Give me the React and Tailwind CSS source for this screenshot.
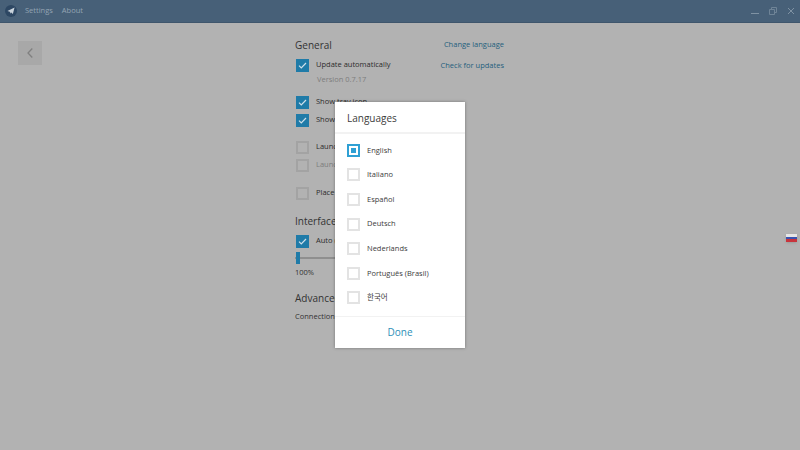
const languages = ["English", "Italiano", "Español", "Deutsch", "Nederlands", "Português (Brasil)", "한국어"];

function CheckRow({ checked, dim, label, className }) {
    return (
        <div className={`flex items-center h-[14px] ml-px ${className || ""}`}>
            <div className={`w-[13px] h-[13px] shrink-0 flex items-center justify-center ${checked ? "bg-[#1f7ba8]" : "border-2 border-[#a3a3a3]"}`}>
                {checked && (
                    <svg width="9" height="7" viewBox="0 0 10 8" fill="none">
                        <path d="M1 4.2 L3.6 6.8 L9 1.2" stroke="#cfe0ea" strokeWidth="1.4" />
                    </svg>
                )}
            </div>
            <span className={`ml-[7px] text-[7.5px] whitespace-nowrap ${dim ? "text-[#7d7d7d]" : "text-[#2c2c2c]"}`}>{label}</span>
        </div>
    );
}

function LanguageRow({ name, selected }) {
    return (
        <div className="flex items-center h-[24.6px] pl-[12px]">
            <div className={`w-[13px] h-[13px] flex items-center justify-center border-2 ${selected ? "border-[#2fa0d4]" : "border-[#e3e3e3]"}`}>
                {selected && <div className="w-[5px] h-[5px] bg-[#2fa0d4]" />}
            </div>
            <span className="ml-[7px] text-[7.5px] text-[#3c3c3c]">{name}</span>
        </div>
    );
}

export default function App() {
    return (
        <div className="relative w-[800px] h-[450px] overflow-hidden bg-[#b2b2b2] font-['Open_Sans','Noto_Sans_CJK_KR',sans-serif]">
            {/* Title bar */}
            <div className="flex items-center h-[23px] bg-[#476078] border-b border-[#3f566c]">
                <div className="ml-[5px] w-[12px] h-[12px] rounded-full bg-[#2d4763] flex items-center justify-center">
                    <svg width="8" height="8" viewBox="0 0 9 9">
                        <path d="M0.5 4.5 L8.5 0.7 L6.6 8 L4.4 6 L3.6 7.6 L3.2 5.3 Z" fill="#c9d3dc" />
                    </svg>
                </div>
                <span className="ml-[8px] text-[7.5px] text-[#93a4b3]">Settings</span>
                <span className="ml-[9px] text-[7.5px] text-[#93a4b3]">About</span>
                <div className="ml-auto mr-[5px] flex items-center gap-[10px]">
                    <svg width="8" height="8" viewBox="0 0 8 8" fill="none"><path d="M0 6.5 H8" stroke="#7f92a3" /></svg>
                    <svg width="8" height="8" viewBox="0 0 8 8" fill="none"><path d="M0.5 2.5 H5.5 V7.5 H0.5 Z M2.5 2 V0.5 H7.5 V5.5 H6" stroke="#6f8497" /></svg>
                    <svg width="8" height="8" viewBox="0 0 8 8" fill="none"><path d="M1 1 L7 7 M7 1 L1 7" stroke="#7f92a3" /></svg>
                </div>
            </div>

            <div className="flex">
                {/* Back button */}
                <div className="ml-[18px] mt-[18px] w-[24px] h-[24px] bg-[#a8a8a8] flex items-center justify-center">
                    <svg width="6" height="10" viewBox="0 0 6 10" fill="none"><path d="M5.3 0.5 L1 5 L5.3 9.5" stroke="#808080" strokeWidth="1.3" /></svg>
                </div>

                {/* Settings column */}
                <div className="ml-[253px] mt-[15px] w-[209px] flex flex-col">
                    <div className="flex justify-between items-center h-[14px]">
                        <span className="text-[10px] text-[#333333]">General</span>
                        <span className="text-[7.5px] text-[#245f7d]">Change language</span>
                    </div>
                    <div className="flex justify-between mt-[6px]">
                        <CheckRow checked label="Update automatically" />
                        <span className="text-[7.5px] text-[#245f7d] leading-[14px]">Check for updates</span>
                    </div>
                    <span className="ml-[22px] text-[7.5px] leading-[14px] text-[#7d7d7d]">Version 0.7.17</span>
                    <CheckRow checked label="Show tray icon" className="mt-[9px]" />
                    <CheckRow checked label="Show taskbar icon" className="mt-[4px]" />
                    <CheckRow label="Launch Telegram" className="mt-[13px]" />
                    <CheckRow dim label="Launch minimized" className="mt-[4px]" />
                    <CheckRow label="Place Telegram" className="mt-[14px]" />
                    <span className="mt-[14px] text-[10px] leading-[14px] text-[#333333]">Interface Scale</span>
                    <CheckRow checked label="Auto (100%)" className="mt-[6px]" />
                    <div className="relative mt-[4px] h-[12px]">
                        <div className="absolute left-0 top-[5px] w-[120px] h-[2px] bg-[#8f8f8f]" />
                        <div className="absolute left-px top-0 w-[4px] h-[12px] bg-[#1f7ba8]" />
                    </div>
                    <span className="mt-[2px] text-[7.5px] leading-[12px] text-[#333333]">100%</span>
                    <span className="mt-[13px] text-[10px] leading-[14px] text-[#333333]">Advanced</span>
                    <span className="mt-[4px] text-[7.5px] leading-[14px] text-[#333333]">Connection type</span>
                </div>
            </div>

            {/* Language flag */}
            <div className="absolute left-[786px] top-[234px] w-[11px] h-[8px] flex flex-col shadow-sm">
                <div className="h-[3px] bg-[#e6e6e6]" />
                <div className="h-[2px] bg-[#3a52b0]" />
                <div className="h-[3px] bg-[#c8343c]" />
            </div>

            {/* Languages dialog */}
            <div className="absolute left-[335px] top-[102px] w-[130px] h-[246px] bg-white shadow-[0_0_3px_rgba(0,0,0,0.35)] flex flex-col">
                <div className="h-[32px] flex items-center pl-[12px] pt-[2px] border-b-2 border-[#f2f2f2] text-[10px] text-[#3c3c3c]">Languages</div>
                <div className="flex flex-col pt-[4px]">
                    {languages.map((name, i) => (
                        <LanguageRow key={name} name={name} selected={i === 0} />
                    ))}
                </div>
                <div className="mt-auto h-[32px] flex items-center justify-center border-t border-[#f2f2f2] text-[10px] text-[#2e8fb8]">Done</div>
            </div>
        </div>
    );
}
